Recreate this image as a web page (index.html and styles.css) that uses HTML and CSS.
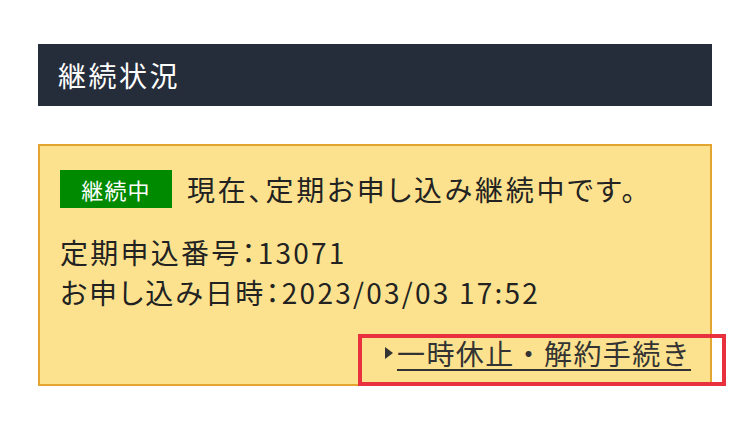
FILE: index.html
```html
<!DOCTYPE html>
<html lang="ja">
<head>
<meta charset="utf-8">
<link rel="stylesheet" href="styles.css">
</head>
<body>
<div class="page">
  <h2 class="section-title">継続状況</h2>
  <div class="status-box">
    <div class="status-row">
      <span class="badge">継続中</span>
      <span class="status-text">現在、定期お申し込み継続中です。</span>
    </div>
    <div class="info-list">
      <p class="info">定期申込番号：13071</p>
      <p class="info">お申し込み日時：2023/03/03 17:52</p>
    </div>
    <div class="link-row">
      <a class="proc-link" href="#"><span class="arrow"></span><span class="link-text">一時休止・解約手続き</span></a>
    </div>
    <span class="highlight"></span>
  </div>
</div>
</body>
</html>
```
FILE: styles.css
```css
* { box-sizing: border-box; }
html, body { margin: 0; padding: 0; background: #ffffff; }
body {
  font-family: "Noto Sans CJK JP", "Noto Sans", sans-serif;
  color: #222222;
}
.page {
  width: 674px;
  margin: 44px 0 0 38px;
}
.section-title {
  margin: 0;
  height: 62px;
  background: #252d3b;
  color: #ffffff;
  font-weight: 400;
  font-size: 28px;
  line-height: 62px;
  padding-left: 20px;
  letter-spacing: 0.09em;
}
.status-box {
  position: relative;
  margin-top: 38px;
  height: 242px;
  background: #fce28e;
  border: 2px solid #e3a530;
  padding: 24px 20px 0 20px;
}
.status-row {
  display: flex;
  align-items: center;
  gap: 15px;
}
.badge {
  display: inline-flex;
  align-items: center;
  justify-content: center;
  width: 112px;
  height: 38px;
  background: #008a00;
  color: #ffffff;
  font-size: 22px;
  letter-spacing: 0.05em;
}
.status-text {
  font-size: 28px;
  line-height: 38px;
  letter-spacing: 0.1em;
  font-feature-settings: "palt";
}
.info-list {
  margin-top: 24px;
}
.info {
  margin: 0;
  font-size: 28px;
  line-height: 40px;
  letter-spacing: 0.08em;
  font-feature-settings: "palt";
}
.link-row {
  display: flex;
  justify-content: flex-end;
  margin-top: 21px;
}
.proc-link {
  display: inline-flex;
  align-items: center;
  color: #333333;
  text-decoration: none;
  font-size: 28px;
  line-height: 40px;
}
.arrow {
  width: 0;
  height: 0;
  border-top: 6px solid transparent;
  border-bottom: 6px solid transparent;
  border-left: 8px solid #333333;
  margin-right: 4px;
}
.link-text {
  text-decoration: underline;
  text-underline-offset: 4px;
  text-decoration-thickness: 1.5px;
  letter-spacing: 0.05em;
  margin-right: -1px;
}
.highlight {
  position: absolute;
  left: 318px;
  top: 188px;
  width: 368px;
  height: 52px;
  border: 4px solid #e8303f;
  pointer-events: none;
}
```
